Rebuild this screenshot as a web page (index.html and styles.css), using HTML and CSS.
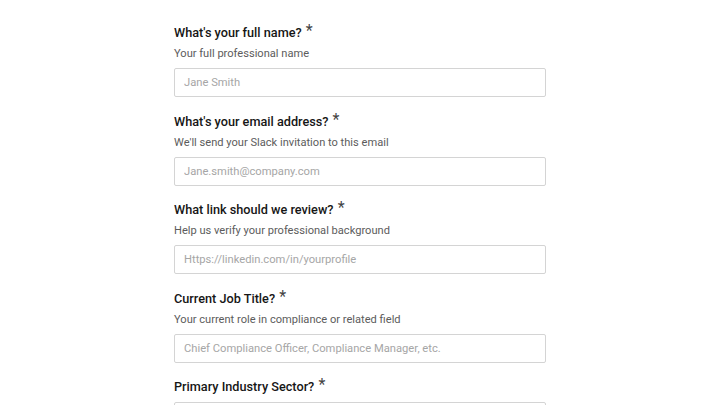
FILE: index.html
```html
<!DOCTYPE html>
<html lang="en">

<head>
    <meta charset="UTF-8">
    <meta name="viewport" content="width=device-width, initial-scale=1.0">
    <title>Join the community</title>
    <link rel="stylesheet" href="styles.css">
</head>

<body>
    <form class="signup-form">
        <div class="field">
            <label class="field-label" for="fullName">What's your full name? <span class="required">*</span></label>
            <p class="field-help">Your full professional name</p>
            <input class="field-input" id="fullName" type="text" placeholder="Jane Smith">
        </div>

        <div class="field">
            <label class="field-label" for="email">What's your email address? <span class="required">*</span></label>
            <p class="field-help">We'll send your Slack invitation to this email</p>
            <input class="field-input" id="email" type="email" placeholder="Jane.smith@company.com">
        </div>

        <div class="field">
            <label class="field-label" for="profile">What link should we review? <span class="required">*</span></label>
            <p class="field-help">Help us verify your professional background</p>
            <input class="field-input" id="profile" type="url" placeholder="Https://linkedin.com/in/yourprofile">
        </div>

        <div class="field">
            <label class="field-label" for="jobTitle">Current Job Title? <span class="required">*</span></label>
            <p class="field-help">Your current role in compliance or related field</p>
            <input class="field-input" id="jobTitle" type="text" placeholder="Chief Compliance Officer, Compliance Manager, etc.">
        </div>

        <div class="field">
            <label class="field-label" for="industry">Primary Industry Sector? <span class="required">*</span></label>
            <input class="field-input" id="industry" type="text">
        </div>
    </form>
</body>

</html>
```

FILE: styles.css
```css
body {
    font-family: Roboto, 'Noto Sans', sans-serif;
    color: #161616;
    background-color: #ffffff;
    margin: 0;
    padding: 24px 0 0;
}

.signup-form {
    width: 372px;
    margin: 0 auto;
}

.field {
    display: flex;
    flex-direction: column;
    margin-bottom: 15.5px;
}

.field-label {
    font-size: 12.7px;
    font-weight: 500;
    line-height: 18px;
    color: #161616;
}

.required {
    font-size: 16px;
    font-weight: 400;
    color: #444;
    vertical-align: top;
    line-height: 14px;
    margin-left: 1px;
}

.field-help {
    margin: 4px 0 0;
    font-size: 11.1px;
    line-height: 16px;
    color: #5c5c5c;
}

.field-input {
    margin-top: 6px;
    height: 29px;
    box-sizing: border-box;
    border: 1px solid #d4d4d4;
    border-radius: 2px;
    padding: 0 9px;
    font-family: inherit;
    font-size: 11.2px;
    color: #161616;
}

.field-input::placeholder {
    color: #a6a6a6;
}
```
